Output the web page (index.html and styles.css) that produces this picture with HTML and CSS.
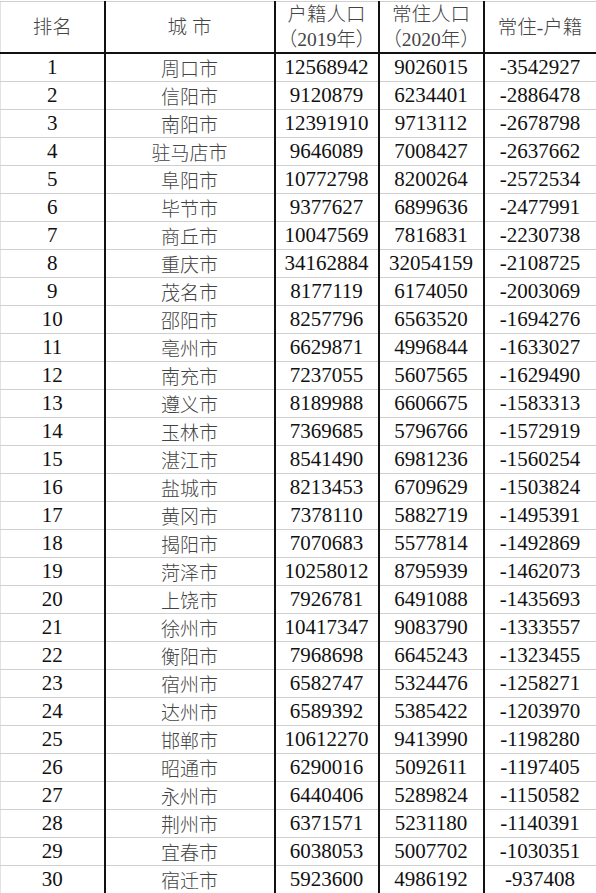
FILE: index.html
```html
<!DOCTYPE html>
<html lang="zh-CN">
<head>
<meta charset="utf-8">
<title>人口排名</title>
<link rel="stylesheet" href="styles.css">
</head>
<body>
<table class="tbl">
<colgroup><col class="c1"><col class="c2"><col class="c3"><col class="c4"><col class="c5"></colgroup>
<thead>
<tr class="head">
<th>排名</th><th>城 市</th><th>户籍人口<br>（2019年）</th><th>常住人口<br>（2020年）</th><th>常住-户籍</th>
</tr>
</thead>
<tbody>
<tr><td>1</td><td class="city">周口市</td><td>12568942</td><td>9026015</td><td>-3542927</td></tr>
<tr><td>2</td><td class="city">信阳市</td><td>9120879</td><td>6234401</td><td>-2886478</td></tr>
<tr><td>3</td><td class="city">南阳市</td><td>12391910</td><td>9713112</td><td>-2678798</td></tr>
<tr><td>4</td><td class="city">驻马店市</td><td>9646089</td><td>7008427</td><td>-2637662</td></tr>
<tr><td>5</td><td class="city">阜阳市</td><td>10772798</td><td>8200264</td><td>-2572534</td></tr>
<tr><td>6</td><td class="city">毕节市</td><td>9377627</td><td>6899636</td><td>-2477991</td></tr>
<tr><td>7</td><td class="city">商丘市</td><td>10047569</td><td>7816831</td><td>-2230738</td></tr>
<tr><td>8</td><td class="city">重庆市</td><td>34162884</td><td>32054159</td><td>-2108725</td></tr>
<tr><td>9</td><td class="city">茂名市</td><td>8177119</td><td>6174050</td><td>-2003069</td></tr>
<tr><td>10</td><td class="city">邵阳市</td><td>8257796</td><td>6563520</td><td>-1694276</td></tr>
<tr><td>11</td><td class="city">亳州市</td><td>6629871</td><td>4996844</td><td>-1633027</td></tr>
<tr><td>12</td><td class="city">南充市</td><td>7237055</td><td>5607565</td><td>-1629490</td></tr>
<tr><td>13</td><td class="city">遵义市</td><td>8189988</td><td>6606675</td><td>-1583313</td></tr>
<tr><td>14</td><td class="city">玉林市</td><td>7369685</td><td>5796766</td><td>-1572919</td></tr>
<tr><td>15</td><td class="city">湛江市</td><td>8541490</td><td>6981236</td><td>-1560254</td></tr>
<tr><td>16</td><td class="city">盐城市</td><td>8213453</td><td>6709629</td><td>-1503824</td></tr>
<tr><td>17</td><td class="city">黄冈市</td><td>7378110</td><td>5882719</td><td>-1495391</td></tr>
<tr><td>18</td><td class="city">揭阳市</td><td>7070683</td><td>5577814</td><td>-1492869</td></tr>
<tr><td>19</td><td class="city">菏泽市</td><td>10258012</td><td>8795939</td><td>-1462073</td></tr>
<tr><td>20</td><td class="city">上饶市</td><td>7926781</td><td>6491088</td><td>-1435693</td></tr>
<tr><td>21</td><td class="city">徐州市</td><td>10417347</td><td>9083790</td><td>-1333557</td></tr>
<tr><td>22</td><td class="city">衡阳市</td><td>7968698</td><td>6645243</td><td>-1323455</td></tr>
<tr><td>23</td><td class="city">宿州市</td><td>6582747</td><td>5324476</td><td>-1258271</td></tr>
<tr><td>24</td><td class="city">达州市</td><td>6589392</td><td>5385422</td><td>-1203970</td></tr>
<tr><td>25</td><td class="city">邯郸市</td><td>10612270</td><td>9413990</td><td>-1198280</td></tr>
<tr><td>26</td><td class="city">昭通市</td><td>6290016</td><td>5092611</td><td>-1197405</td></tr>
<tr><td>27</td><td class="city">永州市</td><td>6440406</td><td>5289824</td><td>-1150582</td></tr>
<tr><td>28</td><td class="city">荆州市</td><td>6371571</td><td>5231180</td><td>-1140391</td></tr>
<tr><td>29</td><td class="city">宜春市</td><td>6038053</td><td>5007702</td><td>-1030351</td></tr>
<tr><td>30</td><td class="city">宿迁市</td><td>5923600</td><td>4986192</td><td>-937408</td></tr>
</tbody>
</table>
</body>
</html>
```
FILE: styles.css
```css
html, body {
  margin: 0;
  padding: 0;
  background: #ffffff;
}
.tbl {
  width: 596px;
  table-layout: fixed;
  border-collapse: collapse;
  font-family: "Liberation Serif", "Noto Sans CJK SC", serif;
  color: #111;
  margin-top: 1px;
}
.c1 { width: 104px; }
.c2 { width: 170px; }
.c3 { width: 104px; }
.c4 { width: 105px; }
.c5 { width: 113px; }
.tbl th, .tbl td {
  padding: 0;
  text-align: center;
  white-space: nowrap;
  border-left: 2px solid #111;
  border-right: 2px solid #111;
  border-top: 1px solid #cfcfcf;
  border-bottom: 1px solid #cfcfcf;
}
.tbl tr > :first-child { border-left: 1px solid #e2e2e2; }
.tbl th {
  font-weight: 300;
  font-size: 19.5px;
  line-height: 25px;
  height: 50px;
  color: #444;
  border-bottom: 2px solid #111;
}
.tbl td {
  font-size: 21px;
  line-height: 27px;
  height: 27px;
}
.tbl td.city {
  font-family: "Noto Sans CJK SC", sans-serif;
  font-weight: 300;
  font-size: 19px;
  color: #444;
}
```
